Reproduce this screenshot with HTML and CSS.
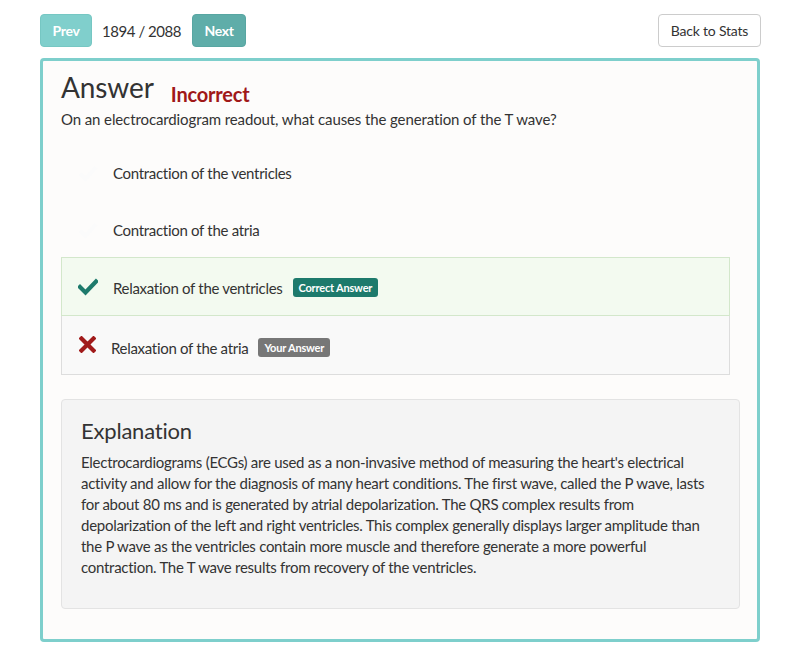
FILE: index.html
```html
<!DOCTYPE html>
<html>
<head>
<meta charset="utf-8">
<link rel="stylesheet" href="styles.css">
</head>
<body>
<div class="page">
  <div class="topbar">
    <div class="nav">
      <button class="btn btn-prev">Prev</button>
      <span class="counter">1894 / 2088</span>
      <button class="btn btn-next">Next</button>
    </div>
    <button class="btn btn-back">Back to Stats</button>
  </div>
  <div class="card">
    <div class="title-row">
      <h1 class="title">Answer</h1>
      <span class="status">Incorrect</span>
    </div>
    <p class="question">On an electrocardiogram readout, what causes the generation of the T wave?</p>
    <div class="options">
      <div class="option">
        <span class="icon icon-blank"><svg width="20" height="18" viewBox="0 0 20 18"><path d="M2 9.5 L7.5 15 L18 3" fill="none" stroke="#fbfbfb" stroke-width="4"/></svg></span>
        <span class="opt-text">Contraction of the ventricles</span>
      </div>
      <div class="option">
        <span class="icon icon-blank"><svg width="20" height="18" viewBox="0 0 20 18"><path d="M2 9.5 L7.5 15 L18 3" fill="none" stroke="#fbfbfb" stroke-width="4"/></svg></span>
        <span class="opt-text">Contraction of the atria</span>
      </div>
      <div class="option option-correct">
        <span class="icon"><svg width="20" height="18" viewBox="0 0 20 18"><path d="M2 9 L7.5 14.5 L18 3.5" fill="none" stroke="#1d7a6c" stroke-width="4.2" stroke-linecap="square"/></svg></span>
        <span class="opt-text">Relaxation of the ventricles</span>
        <span class="badge badge-correct">Correct Answer</span>
      </div>
      <div class="option option-wrong">
        <span class="icon icon-x"><svg width="17" height="17" viewBox="0 0 17 17"><path d="M2.5 2.5 L14.5 14.5 M14.5 2.5 L2.5 14.5" fill="none" stroke="#a11a1a" stroke-width="4.2" stroke-linecap="square"/></svg></span>
        <span class="opt-text">Relaxation of the atria</span>
        <span class="badge badge-yours">Your Answer</span>
      </div>
    </div>
    <div class="well">
      <h2 class="well-title">Explanation</h2>
      <p class="well-text">Electrocardiograms (ECGs) are used as a non-invasive method of measuring the heart's electrical activity and allow for the diagnosis of many heart conditions. The first wave, called the P wave, lasts for about 80 ms and is generated by atrial depolarization. The QRS complex results from depolarization of the left and right ventricles. This complex generally displays larger amplitude than the P wave as the ventricles contain more muscle and therefore generate a more powerful contraction. The T wave results from recovery of the ventricles.</p>
    </div>
  </div>
</div>
</body>
</html>
```

FILE: styles.css
```css
* { box-sizing: border-box; }
html, body { margin: 0; padding: 0; background: #ffffff; }
body {
  font-family: "Lato", "Open Sans", sans-serif;
  color: #333333;
  font-size: 15px;
}
.page {
  width: 720px;
  margin-left: 40px;
  padding-top: 14px;
}
.topbar {
  display: flex;
  justify-content: space-between;
  align-items: center;
  height: 33px;
  margin-right: -1px;
}
.nav { display: flex; align-items: center; }
.btn {
  font-family: inherit;
  height: 33px;
  border-radius: 4px;
  font-size: 14px;
  padding: 0 12px;
  cursor: pointer;
}
.btn-prev {
  width: 52px;
  background: #80cfcc;
  border: 1px solid #76c7c3;
  color: #ffffff;
  font-weight: bold;
  padding: 0;
  letter-spacing: -0.3px;
}
.btn-next {
  width: 54px;
  background: #5fada9;
  border: 1px solid #58a6a2;
  color: #ffffff;
  font-weight: bold;
  padding: 0;
  letter-spacing: -0.3px;
}
.counter {
  font-size: 15px;
  margin: 0 11px 0 10px;
  color: #333;
  letter-spacing: -0.45px;
}
.btn-back {
  width: 103px;
  padding: 0;
  background: #ffffff;
  border: 1px solid #cccccc;
  color: #333333;
  font-size: 14px;
  letter-spacing: -0.2px;
}
.card {
  margin-top: 11px;
  border: 3px solid #7ecfcc;
  border-radius: 4px;
  background: #fdfcfb;
  padding: 6px 18px 31px 18px;
  height: 584px;
}
.title-row {
  display: flex;
  align-items: baseline;
}
.title {
  font-size: 28px;
  font-weight: normal;
  margin: 0;
  line-height: 40px;
  letter-spacing: -0.1px;
}
.status {
  color: #a01818;
  font-weight: bold;
  font-size: 20px;
  margin-left: 17px;
  position: relative;
  top: 4px;
  letter-spacing: -0.2px;
}
.question {
  margin: 2px 0 13px 0;
  font-size: 15px;
  line-height: 21px;
  letter-spacing: -0.11px;
}
.options {
  width: 669px;
}
.option {
  display: flex;
  align-items: center;
  height: 57px;
  padding-left: 16px;
  padding-top: 2px;
  border: 1px solid transparent;
}
.icon {
  width: 35px;
  display: flex;
  align-items: center;
}
.opt-text { font-size: 15px; letter-spacing: -0.3px; }
.option-correct {
  background: #f3faf0;
  border-color: #d3e7cb;
  height: 59px;
}
.option-correct .icon { margin-top: -2px; }
.option-wrong {
  background: #f9f9f9;
  border-color: #dddddd;
  border-top: none;
  height: 59px;
  padding-top: 5px;
}
.option-wrong .icon { width: 33px; padding-left: 1px; margin-top: -6px; }
.badge {
  display: inline-block;
  font-size: 11px;
  font-weight: bold;
  color: #ffffff;
  padding: 3px 6px;
  border-radius: 3px;
  margin-left: 10px;
  line-height: 13px;
  letter-spacing: -0.2px;
}
.badge-correct { background: #1d7a6c; }
.badge-yours { background: #777777; }
.well {
  margin-top: 24px;
  background: #f4f4f4;
  border: 1px solid #e3e3e3;
  border-radius: 4px;
  padding: 16px 19px 28px 19px;
  width: 679px;
  height: 210px;
}
.well-title {
  font-size: 22px;
  font-weight: normal;
  margin: 0 0 6px 0;
  line-height: 30px;
  letter-spacing: -0.2px;
}
.well-text {
  margin: 0;
  font-size: 15px;
  line-height: 21px;
  letter-spacing: -0.27px;
}
```
